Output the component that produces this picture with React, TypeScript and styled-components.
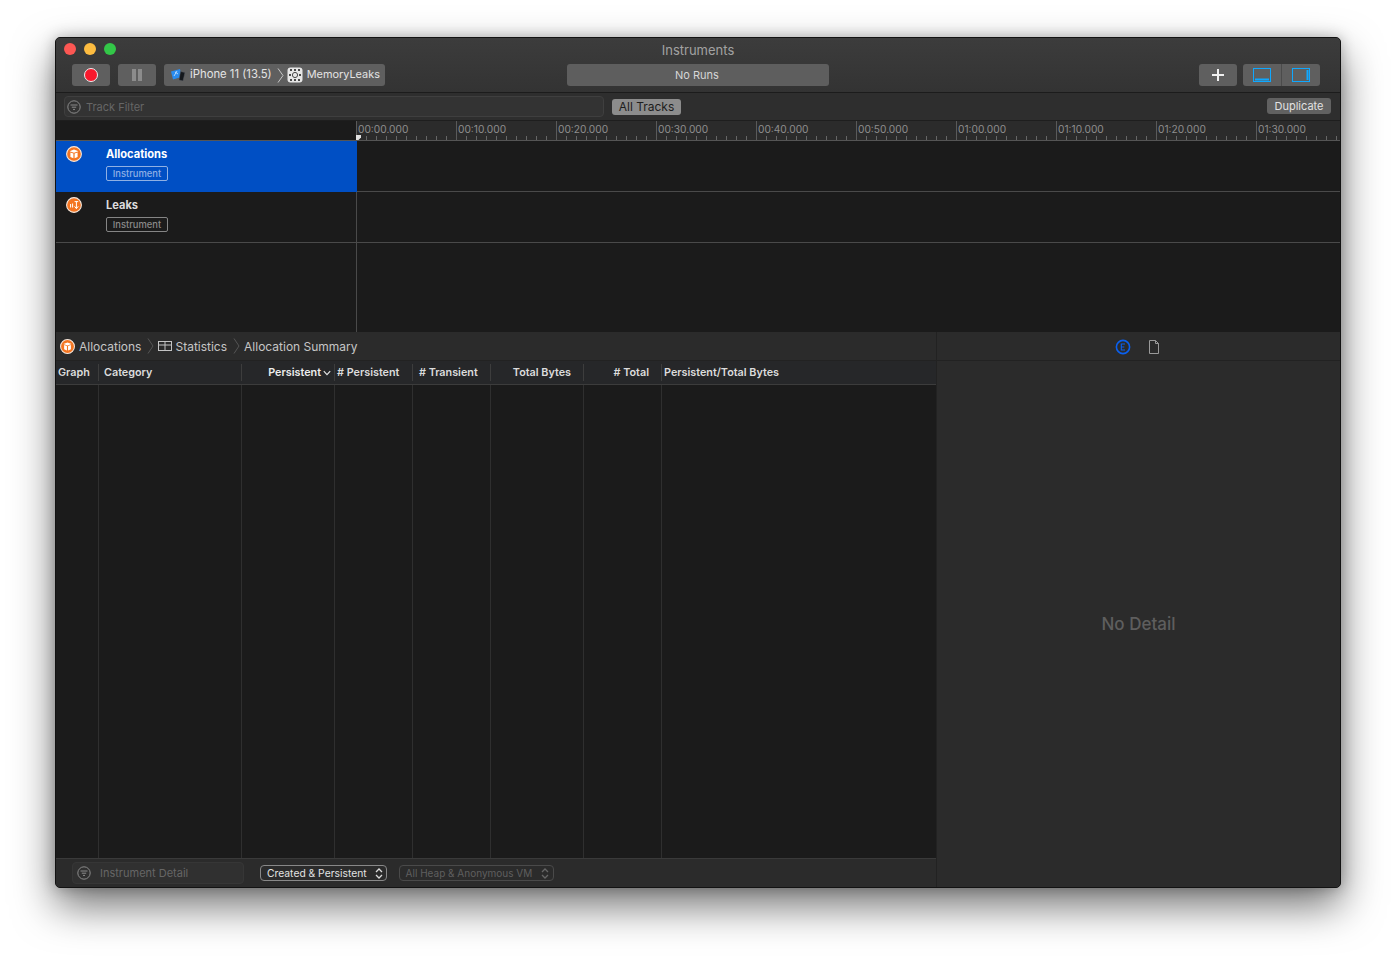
import React from "react";
import styled, { createGlobalStyle } from "styled-components";

const GlobalStyle = createGlobalStyle`
  html, body {
    margin: 0;
    padding: 0;
    background: #ffffff;
    height: 100%;
    overflow: hidden;
  }
  body {
    font-family: Inter, "Liberation Sans", sans-serif;
  }
`;

const rulerLabels = [
  "00:00.000",
  "00:10.000",
  "00:20.000",
  "00:30.000",
  "00:40.000",
  "00:50.000",
  "01:00.000",
  "01:10.000",
  "01:20.000",
  "01:30.000",
];

type TColumn = { title: string; align?: "left" | "right"; sorted?: boolean; pad?: number };

const columns: TColumn[] = [
  { title: "Graph", pad: 2 },
  { title: "Category", pad: 5 },
  { title: "Persistent", align: "right", sorted: true },
  { title: "# Persistent", pad: 2 },
  { title: "# Transient", pad: 6 },
  { title: "Total Bytes", align: "right", pad: 12 },
  { title: "# Total", align: "right", pad: 12 },
  { title: "Persistent/Total Bytes", pad: 2 },
];

const OrangeIcon = (props: { size: number; leaks?: boolean }) => (
  <svg width={props.size} height={props.size} viewBox="0 0 16 16">
    <circle cx="8" cy="8" r="7.4" fill="#f47521" stroke="#f4e8df" strokeWidth="1.1" />
    {props.leaks ? (
      <g fill="none" stroke="#fff" strokeWidth="1">
        <path d="M4.6 7v3.5M6.6 6.5v4M8.6 4.6h3.6M10.4 4.6v7M8.6 9.4l1.8 2.2 1.8-2.2" />
      </g>
    ) : (
      <g fill="#fff">
        <path d="M3.6 5.2 8 3.6l4.4 1.6L8 6.8z" />
        <path d="M4.4 6.4l3 1.1v4.7l-3-1.3zM11.6 6.4l-3 1.1v4.7l3-1.3z" />
      </g>
    )}
  </svg>
);

const FilterIcon = () => (
  <svg width="14" height="14" viewBox="0 0 14 14" fill="none" stroke="#8b8b8b" strokeWidth="1">
    <circle cx="7" cy="7" r="6.2" />
    <path d="M3.5 5h7M4.8 7.2h4.4M6 9.4h2" />
  </svg>
);

const Updown = (props: { color: string }) => (
  <svg width="8" height="11" viewBox="0 0 8 11" fill="none" stroke={props.color} strokeWidth="1.3">
    <path d="M1 4l3-3 3 3M1 7l3 3 3-3" />
  </svg>
);

const Chevron = (props: { height: number; color: string }) => (
  <svg width="7" height={props.height} viewBox="0 0 7 16" preserveAspectRatio="none" fill="none" stroke={props.color} strokeWidth="1">
    <path d="M1 .5 6 8l-5 7.5" />
  </svg>
);

const App = () => {
  return (
    <Page>
      <GlobalStyle />
      <Window>
        <TitleBar>
          <TitleRow>
            <Lights>
              <Light color="#fc5753" />
              <Light color="#fdbc40" />
              <Light color="#33c748" />
            </Lights>
            <WindowTitle>Instruments</WindowTitle>
          </TitleRow>
          <Toolbar>
            <ToolGroupLeft>
              <ToolButton width={38}>
                <RecordDot />
              </ToolButton>
              <ToolButton width={38}>
                <PauseIcon>
                  <i />
                  <i />
                </PauseIcon>
              </ToolButton>
              <TargetButton>
                <svg width="16" height="14" viewBox="0 0 16 14">
                  <path d="M1 3.5 10 1l1.5 8-8.5 2.5z" fill="#2a8cf0" />
                  <path d="M4 8l3-5M5 4l3 2" stroke="#cfe6ff" strokeWidth="0.8" fill="none" />
                  <path d="M10.5 3.5 15 4.5 13 13l-4-1z" fill="#15181c" stroke="#5a5f66" strokeWidth="0.5" />
                </svg>
                <TargetText size={11.3}>iPhone 11 (13.5)</TargetText>
                <TargetSep>
                  <Chevron height={15} color="#c9c9c9" />
                </TargetSep>
                <svg width="16" height="16" viewBox="0 0 16 16">
                  <rect x="0.5" y="0.5" width="15" height="15" rx="3" fill="#e6e6e6" />
                  <g fill="#4a4a4a">
                    <rect x="3" y="2" width="2" height="2" />
                    <rect x="7" y="2" width="2" height="2" />
                    <rect x="11" y="2" width="2" height="2" />
                    <rect x="2" y="7" width="2" height="2" />
                    <rect x="12" y="7" width="2" height="2" />
                    <rect x="3" y="12" width="2" height="2" />
                    <rect x="7" y="12" width="2" height="2" />
                    <rect x="11" y="12" width="2" height="2" />
                  </g>
                  <circle cx="8" cy="8" r="2.6" fill="none" stroke="#4a4a4a" strokeWidth="1" />
                </svg>
                <TargetText size={10.9}>MemoryLeaks</TargetText>
              </TargetButton>
            </ToolGroupLeft>
            <RunsBox>No Runs</RunsBox>
            <ToolGroupRight>
              <ToolButton width={38}>
                <svg width="14" height="14" viewBox="0 0 14 14" stroke="#f0f0f0" strokeWidth="2">
                  <path d="M7 1v12M1 7h12" />
                </svg>
              </ToolButton>
              <Segmented>
                <Segment>
                  <svg width="18" height="14" viewBox="0 0 18 14" fill="none" stroke="#0fa8ff" strokeWidth="1">
                    <rect x="0.5" y="0.5" width="17" height="13" />
                    <rect x="2" y="10.5" width="14" height="2" fill="#0fa8ff" stroke="none" />
                  </svg>
                </Segment>
                <Segment>
                  <svg width="18" height="14" viewBox="0 0 18 14" fill="none" stroke="#0fa8ff" strokeWidth="1">
                    <rect x="0.5" y="0.5" width="17" height="13" />
                    <rect x="14.5" y="2" width="2" height="10" fill="#0fa8ff" stroke="none" />
                  </svg>
                </Segment>
              </Segmented>
            </ToolGroupRight>
          </Toolbar>
        </TitleBar>

        <FilterBar>
          <SearchField>
            <FilterIcon />
            <span>Track Filter</span>
          </SearchField>
          <AllTracks>All Tracks</AllTracks>
          <Spacer />
          <DuplicateButton>Duplicate</DuplicateButton>
        </FilterBar>

        <RulerRow>
          <RulerGutter />
          <Ruler>
            <PlayHead />
            {rulerLabels.map((label) => (
              <RulerCell key={label}>{label}</RulerCell>
            ))}
          </Ruler>
        </RulerRow>

        <Tracks>
          <TrackRow>
            <TrackHead selected>
              <OrangeIcon size={16} />
              <TrackInfo>
                <TrackTitle>Allocations</TrackTitle>
                <TrackBadge selected>Instrument</TrackBadge>
              </TrackInfo>
            </TrackHead>
            <TrackBody />
          </TrackRow>
          <TrackRow>
            <TrackHead>
              <OrangeIcon size={16} leaks />
              <TrackInfo>
                <TrackTitle muted>Leaks</TrackTitle>
                <TrackBadge>Instrument</TrackBadge>
              </TrackInfo>
            </TrackHead>
            <TrackBody />
          </TrackRow>
          <EmptyTrack>
            <EmptyHead />
          </EmptyTrack>
        </Tracks>

        <Lower>
          <DetailPane>
            <Breadcrumbs>
              <OrangeIcon size={15} />
              <Crumb>Allocations</Crumb>
              <CrumbSep>
                <Chevron height={16} color="#555" />
              </CrumbSep>
              <TableIcon width="14" height="10" viewBox="0 0 14 10" fill="none" stroke="#c4c4c4" strokeWidth="1">
                <rect x="0.5" y="0.5" width="13" height="9" />
                <path d="M0.5 4h13M7 .5v9" />
              </TableIcon>
              <Crumb>Statistics</Crumb>
              <CrumbSep>
                <Chevron height={16} color="#555" />
              </CrumbSep>
              <Crumb>Allocation Summary</Crumb>
            </Breadcrumbs>
            <TableHead>
              {columns.map((col) => (
                <HeadCell key={col.title} align={col.align} pad={col.pad} sorted={col.sorted}>
                  {col.title}
                  {col.sorted && (
                    <svg width="8" height="6" viewBox="0 0 8 6" fill="none" stroke="#e4e4e4" strokeWidth="1.2">
                      <path d="M.8 1.2 4 4.6l3.2-3.4" />
                    </svg>
                  )}
                </HeadCell>
              ))}
            </TableHead>
            <TableBody>
              {columns.map((col) => (
                <BodyColumn key={col.title} />
              ))}
            </TableBody>
            <BottomBar>
              <DetailField>
                <FilterIcon />
                <span>Instrument Detail</span>
              </DetailField>
              <SelectBox>
                <span>Created &amp; Persistent</span>
                <Updown color="#dcdcdc" />
              </SelectBox>
              <SelectBox disabled>
                <span>All Heap &amp; Anonymous VM</span>
                <Updown color="#666" />
              </SelectBox>
            </BottomBar>
          </DetailPane>
          <Inspector>
            <InspectorTabs>
              <svg width="16" height="16" viewBox="0 0 16 16">
                <circle cx="8" cy="8" r="6.6" fill="none" stroke="#0a60f0" strokeWidth="1.6" />
                <path d="M10 5H6.3v6H10M6.3 8h3" fill="none" stroke="#0a60f0" strokeWidth="1.1" />
              </svg>
              <svg width="12" height="14" viewBox="0 0 12 14" fill="none" stroke="#9a9a9a" strokeWidth="1">
                <path d="M1.5.5h6l3 3v10h-9zM7.5.5v3h3" />
              </svg>
            </InspectorTabs>
            <NoDetail>No Detail</NoDetail>
          </Inspector>
        </Lower>
      </Window>
    </Page>
  );
};

export default App;

const Page = styled.div`
  width: 1396px;
  height: 961px;
  padding: 37px 55px 0;
  box-sizing: border-box;
  overflow: hidden;
`;

const Window = styled.div`
  width: 1286px;
  height: 851px;
  box-sizing: border-box;
  display: flex;
  flex-direction: column;
  background: #2b2b2b;
  border: 1px solid #121212;
  border-radius: 5px;
  overflow: hidden;
  box-shadow: 0 18px 42px rgba(0, 0, 0, 0.55), 0 0 14px rgba(0, 0, 0, 0.25);
`;

const TitleBar = styled.div`
  height: 55px;
  flex: none;
  box-sizing: border-box;
  display: flex;
  flex-direction: column;
  background: linear-gradient(#3c3c3c, #333333);
  border-bottom: 1px solid #1c1c1c;
`;

const TitleRow = styled.div`
  height: 23px;
  flex: none;
  position: relative;
  display: flex;
  align-items: center;
  justify-content: center;
`;

const Lights = styled.div`
  position: absolute;
  left: 8px;
  top: 5px;
  display: flex;
  gap: 8px;
`;

const Light = styled.span<{ color: string }>`
  width: 12px;
  height: 12px;
  border-radius: 50%;
  background: ${(p) => p.color};
`;

const WindowTitle = styled.div`
  font-size: 13px;
  color: #a2a2a2;
`;

const Toolbar = styled.div`
  display: grid;
  grid-template-columns: 1fr 262px 1fr;
  align-items: center;
  height: 22px;
  margin-top: 3px;
  padding: 0 16px;
`;

const ToolGroupLeft = styled.div`
  display: flex;
  gap: 8px;
`;

const ToolGroupRight = styled.div`
  display: flex;
  gap: 6px;
  justify-content: flex-end;
  margin-right: 4px;
`;

const ToolButton = styled.div<{ width: number }>`
  width: ${(p) => p.width}px;
  height: 22px;
  border-radius: 3px;
  background: #5f5f5f;
  display: flex;
  align-items: center;
  justify-content: center;
`;

const RecordDot = styled.span`
  width: 12px;
  height: 12px;
  border-radius: 50%;
  background: #f8182c;
  border: 1px solid #eee;
`;

const PauseIcon = styled.span`
  display: flex;
  gap: 2px;
  i {
    width: 4px;
    height: 12px;
    background: #8c8c8c;
  }
`;

const TargetButton = styled.div`
  height: 22px;
  width: 221px;
  box-sizing: border-box;
  border-radius: 3px;
  background: #5f5f5f;
  display: flex;
  align-items: center;
  padding-left: 6px;
  gap: 4px;
`;

const TargetText = styled.span<{ size: number }>`
  font-size: ${(p) => p.size}px;
  line-height: 20px;
  padding-bottom: 2px;
  color: #e4e4e4;
  white-space: nowrap;
`;

const TargetSep = styled.span`
  display: flex;
  margin: 0 -1px 0 1px;
`;

const RunsBox = styled.div`
  height: 22px;
  border-radius: 3px;
  background: #5e5e5e;
  color: #d6d6d6;
  font-size: 11px;
  padding-right: 2px;
  box-sizing: border-box;
  display: flex;
  align-items: center;
  justify-content: center;
`;

const Segmented = styled.div`
  display: flex;
  height: 22px;
  width: 77px;
  border-radius: 3px;
  overflow: hidden;
  background: #5f5f5f;
`;

const Segment = styled.div`
  flex: 1;
  display: flex;
  align-items: center;
  justify-content: center;
  & + & {
    border-left: 1px solid #4b4b4b;
  }
`;

const FilterBar = styled.div`
  height: 28px;
  flex: none;
  box-sizing: border-box;
  display: flex;
  align-items: center;
  padding: 0 9px 0 8px;
  background: #2e2e2e;
  border-bottom: 1px solid #1e1e1e;
`;

const SearchField = styled.div`
  width: 540px;
  height: 21px;
  box-sizing: border-box;
  border: 1px solid #3f3f3f;
  border-radius: 4px;
  background: #333;
  display: flex;
  align-items: center;
  gap: 5px;
  padding-left: 2px;
  font-size: 11px;
  color: #666;
`;

const AllTracks = styled.div`
  margin-left: 8px;
  height: 16px;
  width: 69px;
  border-radius: 3px;
  background: #8c8c8c;
  color: #1d1d1d;
  font-size: 12px;
  display: flex;
  align-items: center;
  justify-content: center;
`;

const Spacer = styled.div`
  flex: 1;
`;

const DuplicateButton = styled.div`
  height: 16px;
  width: 64px;
  margin-bottom: 2px;
  border-radius: 3px;
  background: #616161;
  color: #e2e2e2;
  font-size: 11px;
  display: flex;
  align-items: center;
  justify-content: center;
`;

const RulerRow = styled.div`
  height: 20px;
  flex: none;
  display: flex;
  background: #2b2b2b;
`;

const RulerGutter = styled.div`
  width: 300px;
  flex: none;
  box-sizing: border-box;
  background: #1b1b1b;
  border-bottom: 1px solid #555;
`;

const Ruler = styled.div`
  flex: 1;
  display: flex;
  position: relative;
  overflow: hidden;
  border-bottom: 1px solid #555;
  box-sizing: border-box;
  background: repeating-linear-gradient(90deg, #666 0 1px, transparent 1px 10px) 0 100% / 100% 4px no-repeat;
`;

const PlayHead = styled.span`
  position: absolute;
  left: 0;
  bottom: 0;
  width: 5px;
  height: 5px;
  background: #e0e0e0;
  clip-path: polygon(0 0, 100% 0, 100% 50%, 50% 100%, 0 100%);
`;

const RulerCell = styled.div`
  width: 100px;
  flex: none;
  box-sizing: border-box;
  border-left: 1px solid #5a5a5a;
  padding-left: 1px;
  font-size: 10.2px;
  line-height: 17px;
  color: #8e8e8e;
  white-space: nowrap;
`;

const Tracks = styled.div`
  height: 191px;
  flex: none;
  display: flex;
  flex-direction: column;
  background: #1b1b1b;
`;

const TrackRow = styled.div`
  height: 51px;
  flex: none;
  box-sizing: border-box;
  display: flex;
  border-bottom: 1px solid #4a4a4a;
`;

const TrackHead = styled.div<{ selected?: boolean }>`
  width: 301px;
  flex: none;
  box-sizing: border-box;
  display: flex;
  align-items: flex-start;
  gap: 24px;
  padding: 5px 0 0 10px;
  background: ${(p) => (p.selected ? "#004fc4" : "#1b1b1b")};
  border-right: 1px solid ${(p) => (p.selected ? "#004fc4" : "#4a4a4a")};
  margin-bottom: ${(p) => (p.selected ? "-1px" : "0")};
`;

const TrackInfo = styled.div`
  display: flex;
  flex-direction: column;
  align-items: flex-start;
  gap: 4px;
`;

const TrackTitle = styled.div<{ muted?: boolean }>`
  font-size: 11.1px;
  line-height: 16px;
  font-weight: 700;
  color: ${(p) => (p.muted ? "#dcdcdc" : "#ffffff")};
`;

const TrackBadge = styled.div<{ selected?: boolean }>`
  width: 62px;
  height: 15px;
  box-sizing: border-box;
  border: 1px solid ${(p) => (p.selected ? "#8fb0e4" : "#858585")};
  border-radius: 2px;
  font-size: 9.4px;
  font-weight: 500;
  color: ${(p) => (p.selected ? "#8fb0e4" : "#8a8a8a")};
  display: flex;
  align-items: center;
  justify-content: center;
`;

const TrackBody = styled.div`
  flex: 1;
`;

const EmptyTrack = styled.div`
  flex: 1;
  display: flex;
`;

const EmptyHead = styled.div`
  width: 301px;
  box-sizing: border-box;
  border-right: 1px solid #4a4a4a;
`;

const Lower = styled.div`
  flex: 1;
  min-height: 0;
  display: flex;
`;

const DetailPane = styled.div`
  width: 881px;
  flex: none;
  box-sizing: border-box;
  display: flex;
  flex-direction: column;
  border-right: 1px solid #222;
`;

const Breadcrumbs = styled.div`
  height: 29px;
  flex: none;
  box-sizing: border-box;
  display: flex;
  align-items: center;
  gap: 3px;
  padding-left: 4px;
  background: #2b2b2b;
  border-bottom: 1px solid #222;
`;

const Crumb = styled.span`
  font-size: 12px;
  color: #c6c6c6;
  margin-left: 1px;
`;

const CrumbSep = styled.span`
  display: flex;
  margin-left: 3px;
`;

const TableIcon = styled.svg`
  margin: 0 -1px 0 1px;
`;

const TableHead = styled.div`
  height: 24px;
  flex: none;
  box-sizing: border-box;
  display: grid;
  grid-template-columns: 42px 143px 93px 78px 78px 93px 78px 1fr;
  background: #262729;
  border-bottom: 1px solid #3c3c3c;
`;

const HeadCell = styled.div<{ align?: "left" | "right"; pad?: number; sorted?: boolean }>`
  display: flex;
  align-items: center;
  justify-content: ${(p) => (p.align === "right" ? "flex-end" : "flex-start")};
  gap: 2px;
  font-size: 10.8px;
  line-height: 14px;
  font-weight: 600;
  color: ${(p) => (p.sorted ? "#ececec" : "#dcdcdc")};
  white-space: nowrap;
  box-sizing: border-box;
  margin: 3px 0;
  padding: ${(p) => (p.align === "right" ? `0 ${p.sorted ? 3 : p.pad ?? 1}px 0 0` : `0 0 0 ${p.pad ?? 1}px`)};
  & + & {
    border-left: 1px solid #3d3d3d;
  }
`;

const TableBody = styled.div`
  flex: 1;
  min-height: 0;
  display: grid;
  grid-template-columns: 42px 143px 93px 78px 78px 93px 78px 1fr;
  background: #1b1b1b;
`;

const BodyColumn = styled.div`
  & + & {
    border-left: 1px solid #2f2f2f;
  }
`;

const BottomBar = styled.div`
  height: 29px;
  flex: none;
  box-sizing: border-box;
  display: flex;
  align-items: center;
  gap: 16px;
  padding-left: 16px;
  background: #2b2b2b;
  border-top: 1px solid #3a3a3a;
`;

const DetailField = styled.div`
  width: 172px;
  height: 22px;
  box-sizing: border-box;
  border: 1px solid #363636;
  border-radius: 4px;
  background: #303030;
  display: flex;
  align-items: center;
  gap: 9px;
  padding-left: 4px;
  font-size: 11px;
  color: #666;
`;

const SelectBox = styled.div<{ disabled?: boolean }>`
  height: 16px;
  box-sizing: border-box;
  border: 1px solid ${(p) => (p.disabled ? "#4a4a4a" : "#888")};
  border-radius: 4px;
  margin-left: ${(p) => (p.disabled ? "-4px" : "0")};
  display: flex;
  align-items: center;
  gap: ${(p) => (p.disabled ? "9px" : "8px")};
  padding: 0 ${(p) => (p.disabled ? "4px" : "3px")} 0 6px;
  font-size: ${(p) => (p.disabled ? "10px" : "10.3px")};
  color: ${(p) => (p.disabled ? "#5f5f5f" : "#e2e2e2")};
  white-space: nowrap;
`;

const Inspector = styled.div`
  flex: 1;
  min-width: 0;
  display: flex;
  flex-direction: column;
  background: #2b2b2b;
`;

const InspectorTabs = styled.div`
  height: 29px;
  flex: none;
  box-sizing: border-box;
  display: flex;
  align-items: center;
  justify-content: center;
  gap: 17px;
  padding: 2px 2px 0 0;
  border-bottom: 1px solid #222;
`;

const NoDetail = styled.div`
  flex: 1;
  display: flex;
  align-items: center;
  justify-content: center;
  font-size: 17px;
  font-weight: 500;
  color: #5e5e5e;
`;
